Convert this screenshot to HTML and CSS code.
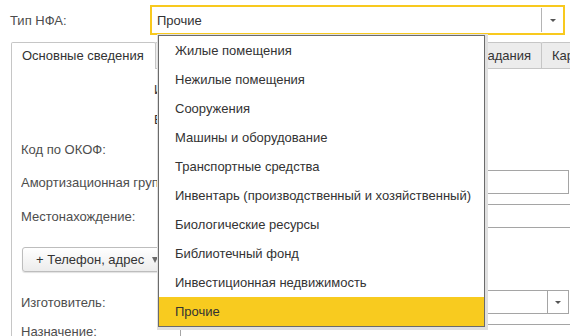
FILE: index.html
```html
<!DOCTYPE html>
<html lang="ru">
<head>
<meta charset="utf-8">
<title>Тип НФА</title>
<link rel="stylesheet" href="styles.css">
</head>
<body>
<div class="page">
  <div class="top">
    <span class="top-label">Тип НФА:</span>
    <div class="combo">
      <span class="combo-text">Прочие</span>
      <span class="combo-btn"><span class="tri"></span></span>
    </div>
  </div>

  <div class="tabs">
    <div class="tab active">Основные сведения</div>
    <div class="tab grow">Дополнительно</div>
    <div class="tab">Параметры задания</div>
    <div class="tab fixed">Карточка</div>
  </div>

  <div class="content">
    <div class="row row-a r1"><span></span><span class="cap">Инвентарный номер</span></div>
    <div class="row row-a r2"><span></span><span class="cap">Балансовая стоимость</span></div>
    <div class="row r3"><span class="label">Код по ОКОФ:</span><span></span></div>
    <div class="row r4"><span class="label">Амортизационная группа:</span><span class="field fa"></span></div>
    <div class="row r5"><span class="label">Местонахождение:</span><span class="field fb"></span></div>
    <div class="row-btn r6">
      <button class="btn" type="button"><span>+ Телефон, адрес</span><span class="btn-tri"></span></button>
    </div>
    <div class="row r7"><span class="label">Изготовитель:</span><span class="field fc"><span class="field-btn"><span class="tri"></span></span></span></div>
    <div class="row r8"><span class="label top-aligned">Назначение:</span><span class="field fd"></span></div>
  </div>

  <ul class="popup">
    <li>Жилые помещения</li>
    <li>Нежилые помещения</li>
    <li>Сооружения</li>
    <li>Машины и оборудование</li>
    <li>Транспортные средства</li>
    <li>Инвентарь (производственный и хозяйственный)</li>
    <li>Биологические ресурсы</li>
    <li>Библиотечный фонд</li>
    <li>Инвестиционная недвижимость</li>
    <li class="selected">Прочие</li>
  </ul>
</div>
</body>
</html>
```

FILE: styles.css
```css
html, body {
  margin: 0;
  padding: 0;
  background: #ffffff;
}

body {
  width: 570px;
  height: 336px;
  overflow: hidden;
  font-family: "Liberation Sans", Arial, sans-serif;
  font-size: 13px;
  color: #333333;
}

.page {
  position: relative;
  width: 570px;
  height: 336px;
  overflow: hidden;
}

/* top combobox row */
.top {
  display: flex;
  align-items: center;
  padding: 5px 0 0 10px;
  height: 30px;
}

.top-label {
  width: 140px;
  color: #4d4d4d;
}

.combo {
  box-sizing: border-box;
  width: 415px;
  height: 30px;
  border: 2px solid #f8c91e;
  display: flex;
  align-items: center;
  background: #fff;
}

.combo-text {
  flex: 1;
  padding-left: 5px;
  color: #333;
}

.combo-btn {
  box-sizing: border-box;
  width: 22px;
  height: 24px;
  border-left: 1px solid #b4b4b4;
  display: flex;
  align-items: center;
  justify-content: center;
}

.tri {
  width: 0;
  height: 0;
  border-left: 3px solid transparent;
  border-right: 3px solid transparent;
  border-top: 3px solid #555;
}

/* tabs */
.tabs {
  display: flex;
  margin: 7px 0 0 11px;
  width: 610px;
  height: 26px;
}

.tab {
  box-sizing: border-box;
  border: 1px solid #c6c6c6;
  border-bottom: none;
  border-radius: 2px 2px 0 0;
  background: #ececec;
  padding: 0 10px;
  line-height: 25px;
  margin-left: -1px;
  white-space: nowrap;
  color: #333;
}

.tab:first-child {
  margin-left: 0;
}

.tab.active {
  background: #fff;
  position: relative;
  z-index: 1;
  height: 27px;
  padding-right: 11px;
}

.tab.grow {
  flex: 1;
}

.tab.fixed {
  flex: none;
  width: 80px;
}

/* content area */
.content {
  margin-left: 11px;
  width: 620px;
  height: 270px;
  border-left: 1px solid #c6c6c6;
  border-top: 1px solid #c6c6c6;
  box-sizing: border-box;
}

.row {
  display: grid;
  grid-template-columns: 159px 1fr;
  align-items: center;
  height: 24px;
  padding-left: 9px;
}

.row-a {
  grid-template-columns: 133px 1fr;
}

.label {
  color: #4d4d4d;
  white-space: nowrap;
  overflow: hidden;
}

.label.top-aligned {
  align-self: start;
  line-height: 16px;
}

.cap {
  color: #333;
  white-space: nowrap;
}

.r1 { margin-top: 8px; }
.r2 { margin-top: 6px; }
.r3 { margin-top: 6px; }
.r4 { margin-top: 9px; }
.r5 { margin-top: 10px; }
.r7 { margin-top: 18px; }
.r8 { margin-top: 10px; }

.field {
  box-sizing: border-box;
  height: 24px;
  border: 1px solid #a5a5a5;
  background: #fff;
  display: flex;
  justify-content: flex-end;
}

.fa { width: 389px; }
.fb { width: 430px; }
.fc { width: 389px; }
.fd { width: 430px; }

.field-btn {
  box-sizing: border-box;
  width: 21px;
  border-left: 1px solid #a5a5a5;
  display: flex;
  align-items: center;
  justify-content: center;
}

.row-btn {
  margin-top: 19px;
  padding-left: 10px;
  height: 25px;
}

.btn {
  box-sizing: border-box;
  height: 25px;
  width: 150px;
  display: inline-flex;
  align-items: center;
  gap: 8px;
  padding: 0 6px 0 13px;
  border: 1px solid #bdbdbd;
  border-radius: 3px;
  background: linear-gradient(#ffffff, #ececec);
  box-shadow: 0 1px 1px rgba(0, 0, 0, 0.12);
  font-family: "Liberation Sans", Arial, sans-serif;
  font-size: 13px;
  color: #333;
}

.btn-tri {
  width: 0;
  height: 0;
  border-left: 3px solid transparent;
  border-right: 3px solid transparent;
  border-top: 6px solid #6a6a6a;
}

/* dropdown list (overlay) */
.popup {
  position: absolute;
  left: 158px;
  top: 35px;
  width: 327px;
  box-sizing: border-box;
  margin: 0;
  padding: 0;
  list-style: none;
  background: #fff;
  border: 1px solid #6b6b6b;
  box-shadow: 1px 1px 0 2px #e0e0e0;
  z-index: 5;
}

.popup li {
  height: 29px;
  line-height: 29px;
  padding-left: 16px;
  color: #333;
  white-space: nowrap;
}

.popup li.selected {
  background: #f8cb1f;
}
```
